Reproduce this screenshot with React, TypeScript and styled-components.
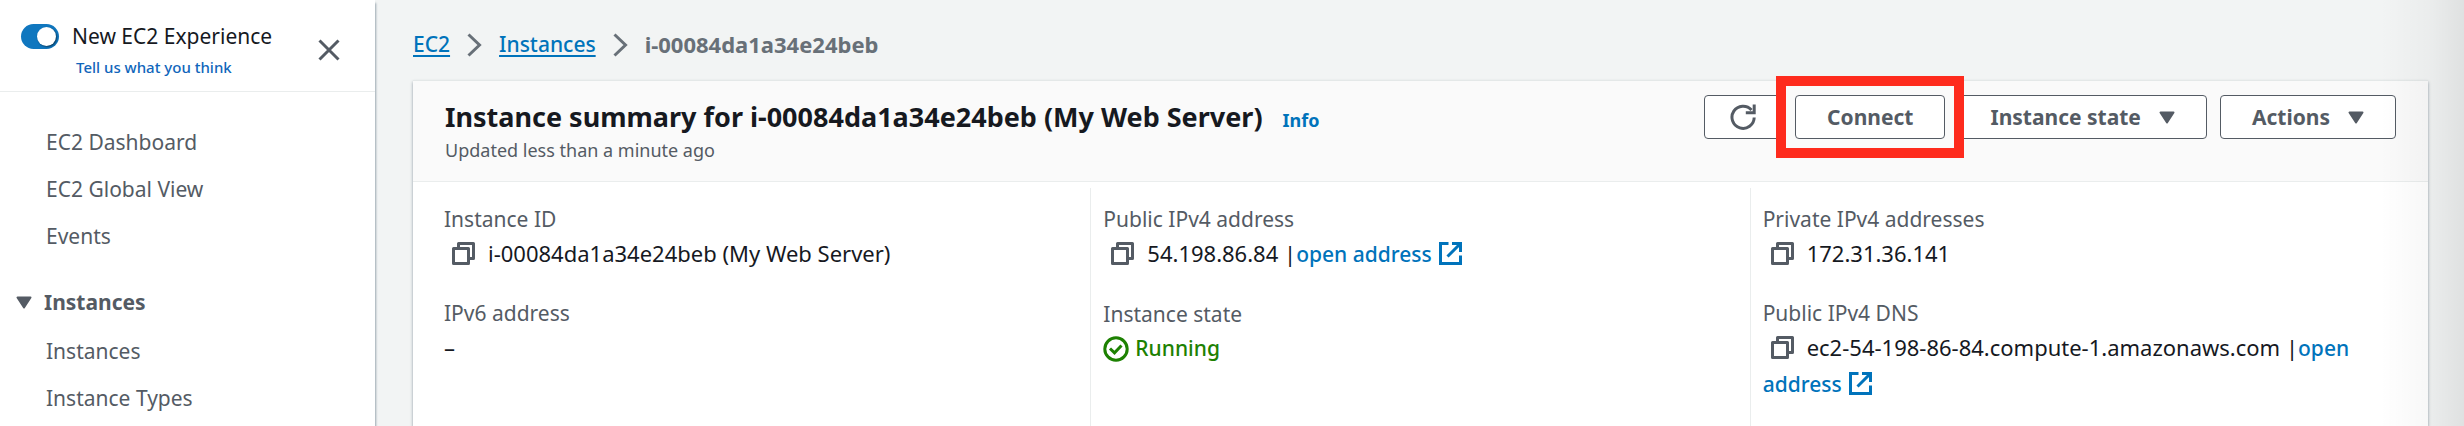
import React from 'react';
import styled, { createGlobalStyle } from 'styled-components';

const GlobalStyle = createGlobalStyle`
  *, *::before, *::after { box-sizing: border-box; }
  body {
    margin: 0;
    background: #f2f4f4;
    color: #16191f;
    font-family: 'Noto Sans', 'Open Sans', sans-serif;
    font-size: 21px;
    line-height: 35px;
  }
  button, input { font: inherit; }
`;

const Page = styled.div`
  position: relative;
  display: flex;
  min-height: 100vh;
  overflow: hidden;
`;

const EdgeShade = styled.div`
  position: absolute;
  inset: 0 0 0 auto;
  width: 84px;
  pointer-events: none;
  background: linear-gradient(to right, rgba(0, 0, 0, 0), rgba(0, 0, 0, 0.03) 60%, rgba(0, 0, 0, 0.08));
`;

const Sidebar = styled.aside`
  flex: 0 0 375px;
  background: #fff;
  box-shadow: 1px 3px 2px #9ba7b0;
`;

const SidebarHeader = styled.div`
  display: flex;
  align-items: center;
  justify-content: space-between;
  padding: 19px 35px 11px 21px;
  border-bottom: 1px solid #eaeded;
`;

const Experience = styled.div`
  display: grid;
  grid-template-columns: auto auto;
  column-gap: 13px;
  align-items: center;
`;

const Toggle = styled.input`
  appearance: none;
  display: flex;
  width: 38px;
  height: 25px;
  margin: 0;
  padding: 3px;
  border-radius: 13px;
  background: #1077bf;
  justify-content: flex-end;
  &::before {
    content: '';
    width: 19px;
    height: 19px;
    border-radius: 50%;
    background: #fff;
    box-shadow: 1px 1px 2px rgba(0, 0, 0, 0.5);
  }
  &:not(:checked) { justify-content: flex-start; background: #687078; }
`;

const Feedback = styled.a`
  grid-column: 2;
  padding-left: 4px;
  color: #1166bb;
  font-size: 15px;
  font-weight: 500;
  line-height: 26px;
  text-decoration: none;
`;

const IconButton = styled.button`
  display: inline-flex;
  padding: 0;
  border: 0;
  background: none;
  color: #545b64;
`;

const NavList = styled.ul`
  margin: 0;
  padding: 0 0 0 46px;
  list-style: none;
`;

const Nav = styled.nav`
  padding-top: 27px;
`;

const NavItem = styled.li`
  padding: 6px 0;
`;

const NavLink = styled.a`
  color: #545b64;
  text-decoration: none;
`;

const SectionToggle = styled.button`
  display: flex;
  align-items: center;
  gap: 12px;
  margin-top: 18px;
  padding: 7px 0 8px 16px;
  border: 0;
  background: none;
  color: #545b64;
  font-weight: 700;
`;

const Main = styled.main`
  flex: 1;
  min-width: 0;
  display: flex;
  flex-direction: column;
  padding: 27px 36px 0 38px;
`;

const Breadcrumbs = styled.nav`
  display: flex;
  align-items: center;
  gap: 17px;
  margin-bottom: 18px;
  color: #687078;
`;

const CrumbLink = styled.a`
  color: #0073bb;
  font-weight: 500;
  text-underline-offset: 3px;
  text-decoration-thickness: 2px;
`;

const CurrentCrumb = styled.strong`
  font-size: 22px;
`;

const Card = styled.section`
  flex: 1;
  display: flex;
  flex-direction: column;
  border-top: 1px solid #e4e8e8;
  background: #fff;
  box-shadow: 0 2px 3px #8d99a3;
`;

const CardHeader = styled.header`
  display: flex;
  justify-content: space-between;
  align-items: flex-start;
  padding: 14px 32px 20px;
  border-bottom: 1px solid #eaeded;
  background: #fafafa;
`;

const TitleRow = styled.div`
  display: flex;
  align-items: baseline;
  gap: 20px;
`;

const Title = styled.h1`
  margin: 0;
  font-size: 27px;
  line-height: 44px;
`;

const InfoLink = styled.a`
  color: #0073bb;
  font-size: 18px;
  font-weight: 700;
  text-decoration: none;
`;

const Updated = styled.p`
  margin: 0;
  color: #545b64;
  font-size: 18px;
  line-height: 22px;
`;

const Actions = styled.div`
  display: flex;
  gap: 13px;
`;

const ActionButton = styled.button<{ $compact?: boolean }>`
  display: inline-flex;
  align-items: center;
  justify-content: center;
  gap: 18px;
  height: 44px;
  padding: 0 ${({ $compact }) => ($compact ? '25px' : '31px')};
  border: 1px solid #545b64;
  border-radius: 4px;
  background: #fff;
  color: #545b64;
  font-weight: 700;
`;

const Highlight = styled.div`
  position: relative;
  display: flex;
  &::before {
    content: '';
    position: absolute;
    inset: -19px;
    border: 10px solid #fe2b1d;
    background: #fafafa;
  }
  & > button { position: relative; }
`;

const Details = styled.div`
  flex: 1;
  display: grid;
  grid-template-columns: repeat(3, minmax(0, 1fr));
  margin: 6px 19px 0 18px;
`;

const Column = styled.dl`
  display: flex;
  flex-direction: column;
  gap: 25px;
  margin: 0;
  padding: 14px 12px 0 13px;
  & + & { padding-left: 12px; border-left: 1px solid #eaeded; }
`;

const Term = styled.dt`
  color: #545b64;
  line-height: 34px;
`;

const Value = styled.dd`
  margin: 0;
  font-size: 22px;
`;

const CopyButton = styled(IconButton)`
  margin: 0 13px 0 8px;
  vertical-align: -3px;
`;

const ValueLink = styled.a`
  color: #0073bb;
  font-size: 21px;
  font-weight: 500;
  text-decoration: none;
  & > svg { margin-left: 7px; vertical-align: -3px; }
`;

const Status = styled.span`
  display: inline-flex;
  align-items: center;
  gap: 6px;
  color: #1d8102;
  font-size: 21px;
  font-weight: 500;
`;

const Caret = () => (
  <svg width="16" height="13" viewBox="0 0 16 13" aria-hidden="true">
    <path d="M1.5 1.5h13L8 11.5z" fill="currentColor" stroke="currentColor" strokeWidth="2" strokeLinejoin="round" />
  </svg>
);

const CloseIcon = () => (
  <svg width="22" height="22" viewBox="0 0 22 22" fill="none" stroke="currentColor" strokeWidth="3" aria-hidden="true">
    <path d="M1.5 1.5l19 19M20.5 1.5l-19 19" />
  </svg>
);

const Chevron = () => (
  <svg width="15" height="24" viewBox="0 0 15 24" fill="none" stroke="currentColor" strokeWidth="3" aria-hidden="true">
    <path d="M1.5 1.5L12.5 12l-11 10.5" />
  </svg>
);

const RefreshIcon = () => (
  <svg width="26" height="26" viewBox="0 0 26 26" fill="none" stroke="currentColor" strokeWidth="3" aria-hidden="true">
    <path d="M24.2 13.5A11.1 11.1 0 1 1 21.5 6" />
    <path d="M24.2 .5v8.3h-8.4" />
  </svg>
);

const CopyIcon = () => (
  <svg width="23" height="23" viewBox="0 0 23 23" fill="none" stroke="currentColor" strokeWidth="3" strokeLinejoin="round" aria-hidden="true">
    <path d="M1.5 6.5h15v15h-15z" />
    <path d="M6.5 6.5v-5h15v15h-5" />
  </svg>
);

const ExternalIcon = () => (
  <svg width="23" height="23" viewBox="0 0 23 23" fill="none" stroke="currentColor" strokeWidth="3" aria-hidden="true">
    <path d="M9.5 1.5h-8v20h20v-8" />
    <path d="M13 1.5h8.5V10M21 2L8.5 14.5" />
  </svg>
);

const CheckIcon = () => (
  <svg width="26" height="26" viewBox="0 0 26 26" fill="none" stroke="currentColor" strokeWidth="3" aria-hidden="true">
    <circle cx="13" cy="13" r="11.2" />
    <path d="M7 12.5l4.5 4.3L18.5 9.5" />
  </svg>
);

const Copy = ({ what }: { what: string }) => (
  <CopyButton type="button" aria-label={`Copy ${what}`}>
    <CopyIcon />
  </CopyButton>
);

const Field = ({ label, children }: { label: string; children: React.ReactNode }) => (
  <div>
    <Term>{label}</Term>
    <Value>{children}</Value>
  </div>
);

const NavLinks = ({ items }: { items: string[] }) => (
  <NavList>
    {items.map((item) => (
      <NavItem key={item}>
        <NavLink href="#">{item}</NavLink>
      </NavItem>
    ))}
  </NavList>
);

export default function App() {
  return (
    <Page>
      <GlobalStyle />
      <Sidebar>
        <SidebarHeader>
          <Experience>
            <Toggle type="checkbox" id="experience" defaultChecked />
            <label htmlFor="experience">New EC2 Experience</label>
            <Feedback href="#">Tell us what you think</Feedback>
          </Experience>
          <IconButton type="button" aria-label="Close navigation">
            <CloseIcon />
          </IconButton>
        </SidebarHeader>
        <Nav aria-label="EC2">
          <NavLinks items={['EC2 Dashboard', 'EC2 Global View', 'Events']} />
          <SectionToggle type="button" aria-expanded="true">
            <Caret />
            Instances
          </SectionToggle>
          <NavLinks items={['Instances', 'Instance Types']} />
        </Nav>
      </Sidebar>
      <Main>
        <Breadcrumbs aria-label="Breadcrumbs">
          <CrumbLink href="#">EC2</CrumbLink>
          <Chevron />
          <CrumbLink href="#">Instances</CrumbLink>
          <Chevron />
          <CurrentCrumb>i-00084da1a34e24beb</CurrentCrumb>
        </Breadcrumbs>
        <Card>
          <CardHeader>
            <div>
              <TitleRow>
                <Title>Instance summary for i-00084da1a34e24beb (My Web Server)</Title>
                <InfoLink href="#">Info</InfoLink>
              </TitleRow>
              <Updated>Updated less than a minute ago</Updated>
            </div>
            <Actions>
              <ActionButton type="button" $compact aria-label="Refresh">
                <RefreshIcon />
              </ActionButton>
              <Highlight>
                <ActionButton type="button">Connect</ActionButton>
              </Highlight>
              <ActionButton type="button">
                Instance state
                <Caret />
              </ActionButton>
              <ActionButton type="button">
                Actions
                <Caret />
              </ActionButton>
            </Actions>
          </CardHeader>
          <Details>
            <Column>
              <Field label="Instance ID">
                <Copy what="instance ID" />
                i-00084da1a34e24beb (My Web Server)
              </Field>
              <Field label="IPv6 address">–</Field>
            </Column>
            <Column>
              <Field label="Public IPv4 address">
                <Copy what="public IPv4 address" />
                54.198.86.84 |
                <ValueLink href="#">
                  open address
                  <ExternalIcon />
                </ValueLink>
              </Field>
              <Field label="Instance state">
                <Status>
                  <CheckIcon />
                  Running
                </Status>
              </Field>
            </Column>
            <Column>
              <Field label="Private IPv4 addresses">
                <Copy what="private IPv4 address" />
                172.31.36.141
              </Field>
              <Field label="Public IPv4 DNS">
                <Copy what="public IPv4 DNS" />
                ec2-54-198-86-84.compute-1.amazonaws.com |
                <ValueLink href="#">
                  open address
                  <ExternalIcon />
                </ValueLink>
              </Field>
            </Column>
          </Details>
        </Card>
      </Main>
      <EdgeShade />
    </Page>
  );
}
